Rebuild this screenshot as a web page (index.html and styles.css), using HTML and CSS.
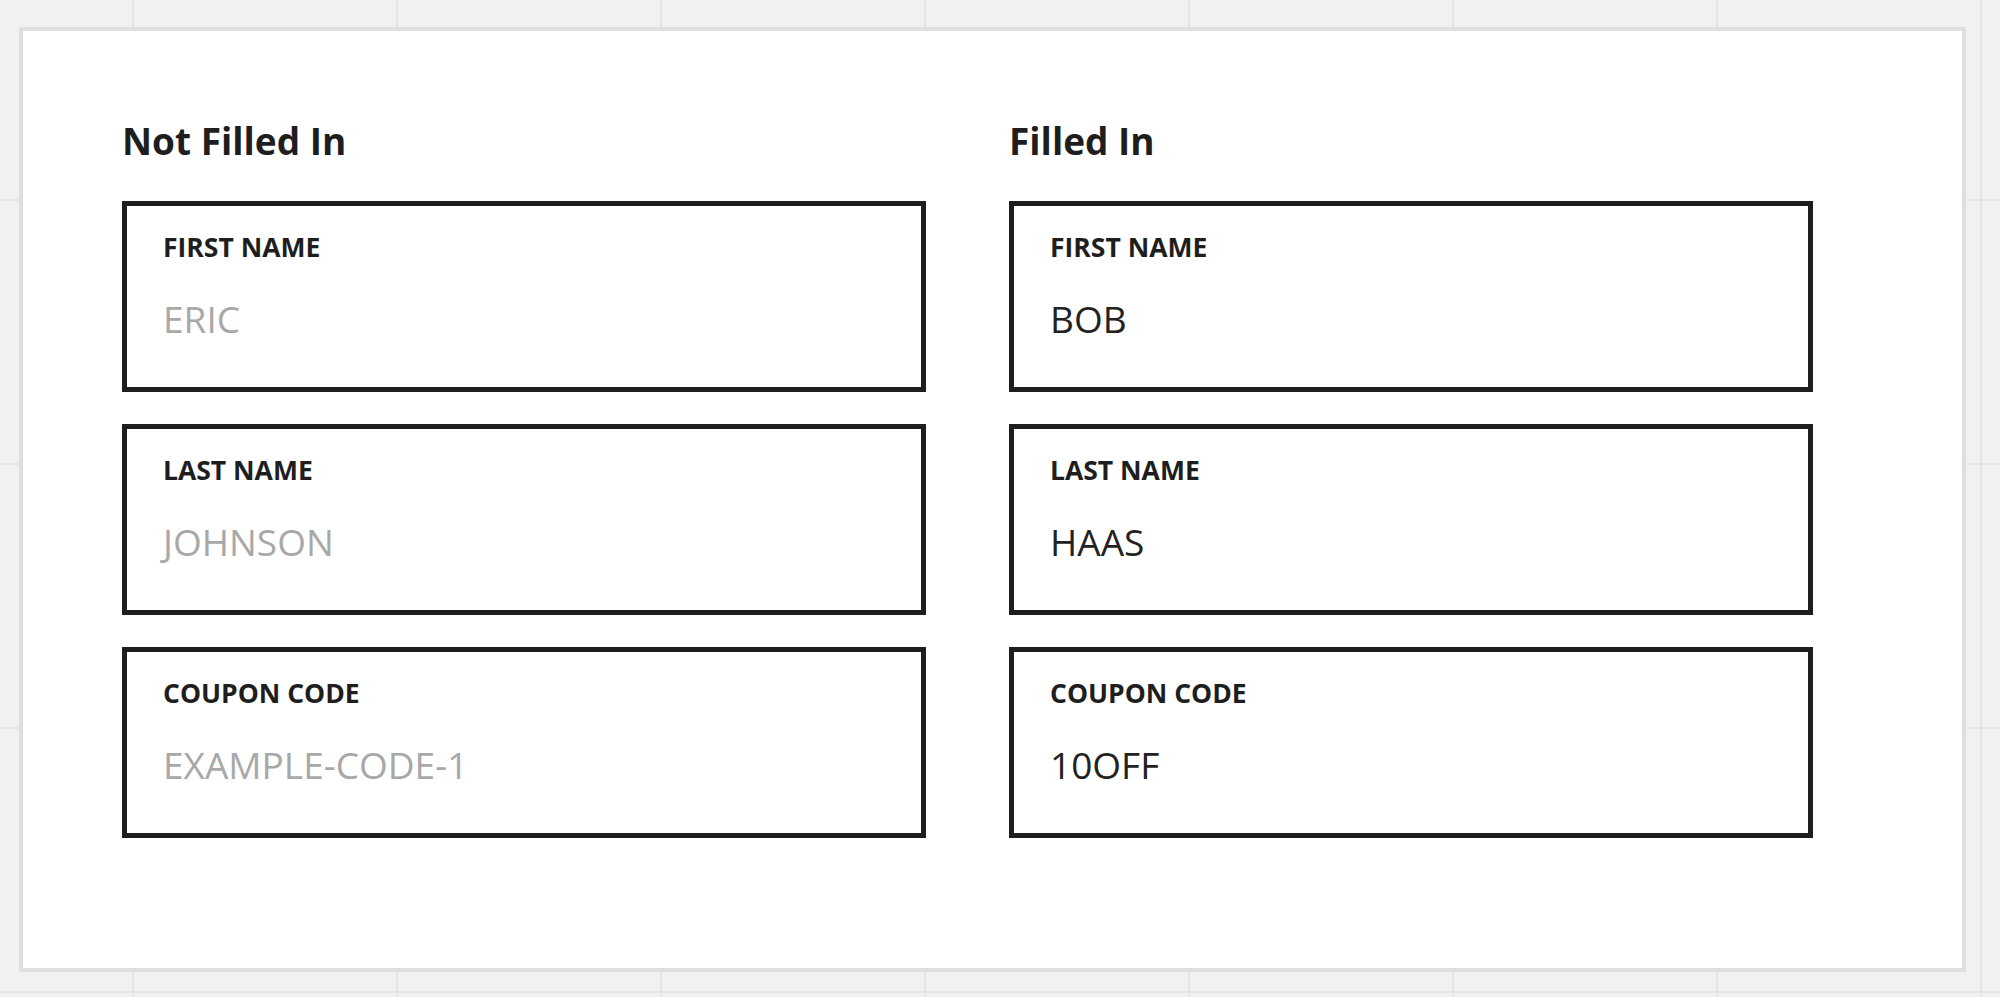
FILE: index.html
```html
<!DOCTYPE html>
<html lang="en">
<head>
    <meta charset="UTF-8">
    <meta name="viewport" content="width=device-width, initial-scale=1.0">
    <title>Form Fields - Filled States</title>
    <link rel="stylesheet" href="styles.css">
</head>
<body>
    <main class="canvas">
        <div class="columns">
            <!-- Empty state -->
            <section class="column">
                <h2 class="column-title">Not Filled In</h2>
                <div class="field">
                    <div class="field-label">FIRST NAME</div>
                    <div class="field-value placeholder">ERIC</div>
                </div>
                <div class="field">
                    <div class="field-label">LAST NAME</div>
                    <div class="field-value placeholder">JOHNSON</div>
                </div>
                <div class="field">
                    <div class="field-label">COUPON CODE</div>
                    <div class="field-value placeholder">EXAMPLE-CODE-1</div>
                </div>
            </section>

            <!-- Filled state -->
            <section class="column">
                <h2 class="column-title">Filled In</h2>
                <div class="field">
                    <div class="field-label">FIRST NAME</div>
                    <div class="field-value">BOB</div>
                </div>
                <div class="field">
                    <div class="field-label">LAST NAME</div>
                    <div class="field-value">HAAS</div>
                </div>
                <div class="field">
                    <div class="field-label">COUPON CODE</div>
                    <div class="field-value">10OFF</div>
                </div>
            </section>
        </div>
    </main>
</body>
</html>
```

FILE: styles.css
```css
/* Basic Reset */
html, body, h2, div, section, main {
    margin: 0;
    padding: 0;
    box-sizing: border-box;
}

body {
    height: 997px;
    padding: 27px 34px 25px 19px;
    font-family: 'Open Sans', 'Liberation Sans', sans-serif;
    color: #1e1e1e;
    background-color: #f1f1f1;
    background-image:
        linear-gradient(to right, #e5e5e5 2px, transparent 2px),
        linear-gradient(to bottom, #e5e5e5 2px, transparent 2px);
    background-size: 264px 264px;
    background-position: 132px 199px;
}

/* White board */
.canvas {
    display: block;
    height: 100%;
    background: #ffffff;
    border: 4px solid #dfdfdf;
    padding: 88px 0 0 99px;
}

.columns {
    display: grid;
    grid-template-columns: 804px 804px;
    column-gap: 83px;
}

.column {
    display: flex;
    flex-direction: column;
    gap: 32px;
}

.column-title {
    font-size: 37px;
    font-weight: 700;
    line-height: 1.2;
    margin-bottom: 6px;
}

/* Field */
.field {
    height: 191px;
    border: 5px solid #1e1e1e;
    padding: 26px 36px 0;
}

.field-label {
    font-size: 26.5px;
    font-weight: 700;
    line-height: 1.2;
}

.field-value {
    margin-top: 33px;
    font-size: 37px;
    font-weight: 400;
    line-height: 1.2;
    color: #222222;
}

.field-value.placeholder {
    color: #a8a8a8;
}
```
